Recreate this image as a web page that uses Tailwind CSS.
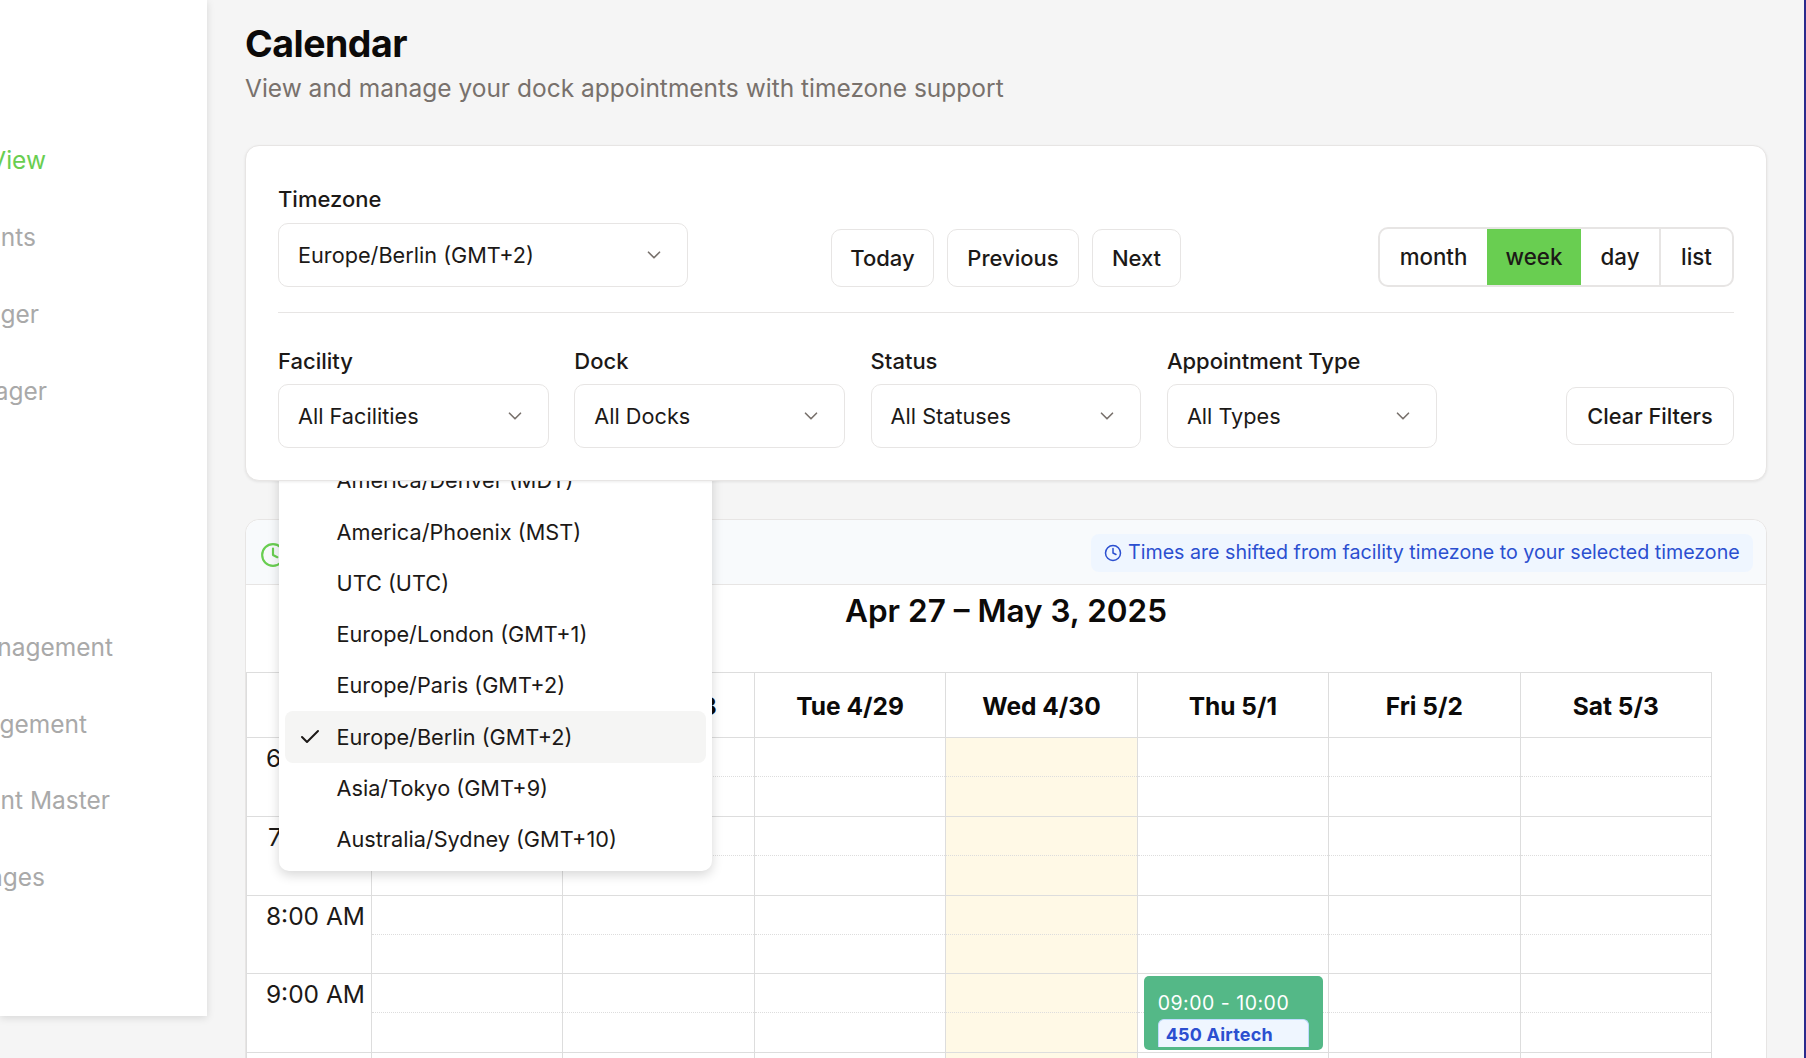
<!DOCTYPE html>
<html lang="en">
<head>
  <meta charset="UTF-8" />
  <title>Calendar</title>
  <script src="https://cdn.jsdelivr.net/npm/@tailwindcss/browser@4"></script>
</head>
<body class="bg-[#f5f5f5] font-['Inter',sans-serif] text-[#1c1917]">
<div class="relative flex h-[1058px] w-[1806px] overflow-hidden">

  <!-- sidebar, scrolled off to the left -->
  <aside class="relative h-[1016px] w-[207px] shrink-0 overflow-hidden bg-white text-[24.5px] leading-[32px] text-[#a9a9a9] shadow-[0_2px_8px_rgba(0,0,0,0.12)]">
    <div class="flex w-[46px] justify-end whitespace-nowrap pt-[144px] text-[#69ce51]">View</div>
    <div class="mt-[45px] flex w-[36px] justify-end whitespace-nowrap">nts</div>
    <div class="mt-[45px] flex w-[39px] justify-end whitespace-nowrap">ger</div>
    <div class="mt-[45px] flex w-[47px] justify-end whitespace-nowrap">ager</div>
    <div class="mt-[224px] flex w-[113px] justify-end whitespace-nowrap">nagement</div>
    <div class="mt-[45px] flex w-[87px] justify-end whitespace-nowrap">gement</div>
    <div class="mt-[44px] flex w-[110px] justify-end whitespace-nowrap">nt Master</div>
    <div class="mt-[45px] flex w-[45px] justify-end whitespace-nowrap">ages</div>
  </aside>

  <main class="relative w-[1559px] shrink-0 pl-[38px]">
    <h1 class="mt-[22px] text-[37.5px] font-bold leading-[44px] tracking-[-0.5px] text-[#0c0a09]">Calendar</h1>
    <p class="mt-[6px] text-[24.5px] leading-[32px] text-[#78716c]">View and manage your dock appointments with timezone support</p>

    <!-- controls card -->
    <section class="relative z-20 mt-[41px] h-[336px] w-[1522px] rounded-[14px] border border-[#e7e5e4] bg-white px-[32px] pt-[39px] shadow-[0_1px_3px_rgba(0,0,0,0.08)]">
      <div class="flex items-end">
        <div>
          <label class="block text-[22px] font-medium leading-[28px]">Timezone</label>
          <button class="mt-[10px] flex h-[64px] w-[410px] items-center justify-between rounded-[10px] border border-[#e7e5e4] bg-white pl-[19px] pr-[22px] text-[21.7px]">
            Europe/Berlin (GMT+2)
            <svg class="h-[22px] w-[22px] text-[#78716c]" viewBox="0 0 24 24" fill="none" stroke="currentColor" stroke-width="1.8" stroke-linecap="round" stroke-linejoin="round"><path d="m6 9 6 6 6-6"/></svg>
          </button>
        </div>
        <div class="ml-[143px] flex gap-[13px] text-[22px] font-medium">
          <button class="h-[58px] w-[103px] rounded-[10px] border border-[#e7e5e4] bg-white">Today</button>
          <button class="h-[58px] w-[132px] rounded-[10px] border border-[#e7e5e4] bg-white">Previous</button>
          <button class="h-[58px] w-[89px] rounded-[10px] border border-[#e7e5e4] bg-white">Next</button>
        </div>
        <div class="ml-auto flex h-[60px] w-[356px] overflow-hidden rounded-[10px] border-2 border-[#e7e5e4] text-[22.3px] font-medium">
          <button class="w-[107px]">month</button>
          <button class="w-[94px] bg-[#69ce51]">week</button>
          <button class="w-[80px] border-r-2 border-[#e7e5e4]">day</button>
          <button class="flex-1">list</button>
        </div>
      </div>
      <div class="mt-[25px] h-px w-full bg-[#e7e5e4]"></div>
      <div class="mt-[34px] flex items-end gap-[25.8px]">
        <div>
          <label class="block text-[22px] font-medium leading-[28px]">Facility</label>
          <button class="mt-[9px] flex h-[64px] w-[270.5px] items-center justify-between rounded-[10px] border border-[#e7e5e4] bg-white pl-[19px] pr-[22px] text-[21.7px]">
            All Facilities
            <svg class="h-[22px] w-[22px] text-[#78716c]" viewBox="0 0 24 24" fill="none" stroke="currentColor" stroke-width="1.8" stroke-linecap="round" stroke-linejoin="round"><path d="m6 9 6 6 6-6"/></svg>
          </button>
        </div>
        <div>
          <label class="block text-[22px] font-medium leading-[28px]">Dock</label>
          <button class="mt-[9px] flex h-[64px] w-[270.5px] items-center justify-between rounded-[10px] border border-[#e7e5e4] bg-white pl-[19px] pr-[22px] text-[21.7px]">
            All Docks
            <svg class="h-[22px] w-[22px] text-[#78716c]" viewBox="0 0 24 24" fill="none" stroke="currentColor" stroke-width="1.8" stroke-linecap="round" stroke-linejoin="round"><path d="m6 9 6 6 6-6"/></svg>
          </button>
        </div>
        <div>
          <label class="block text-[22px] font-medium leading-[28px]">Status</label>
          <button class="mt-[9px] flex h-[64px] w-[270.5px] items-center justify-between rounded-[10px] border border-[#e7e5e4] bg-white pl-[19px] pr-[22px] text-[21.7px]">
            All Statuses
            <svg class="h-[22px] w-[22px] text-[#78716c]" viewBox="0 0 24 24" fill="none" stroke="currentColor" stroke-width="1.8" stroke-linecap="round" stroke-linejoin="round"><path d="m6 9 6 6 6-6"/></svg>
          </button>
        </div>
        <div>
          <label class="block text-[22px] font-medium leading-[28px]">Appointment Type</label>
          <button class="mt-[9px] flex h-[64px] w-[270.5px] items-center justify-between rounded-[10px] border border-[#e7e5e4] bg-white pl-[19px] pr-[22px] text-[21.7px]">
            All Types
            <svg class="h-[22px] w-[22px] text-[#78716c]" viewBox="0 0 24 24" fill="none" stroke="currentColor" stroke-width="1.8" stroke-linecap="round" stroke-linejoin="round"><path d="m6 9 6 6 6-6"/></svg>
          </button>
        </div>
        <button class="ml-auto mb-[3px] h-[58px] w-[168px] rounded-[10px] border border-[#e7e5e4] bg-white text-[21.8px] font-medium">Clear Filters</button>
      </div>
    </section>

    <!-- timezone dropdown, slides under the controls card -->
    <div class="absolute left-[72px] top-[455px] z-10 h-[416px] w-[433px] overflow-hidden rounded-[10px] bg-white px-[6px] text-[21.7px] shadow-[0_4px_12px_rgba(0,0,0,0.16)]">
      <div class="flex h-[51.25px] items-center pl-[51.5px]">America/Denver (MDT)</div>
      <div class="flex h-[51.25px] items-center pl-[51.5px]">America/Phoenix (MST)</div>
      <div class="flex h-[51.25px] items-center pl-[51.5px]">UTC (UTC)</div>
      <div class="flex h-[51.25px] items-center pl-[51.5px]">Europe/London (GMT+1)</div>
      <div class="flex h-[51.25px] items-center pl-[51.5px]">Europe/Paris (GMT+2)</div>
      <div class="relative flex h-[51.25px] items-center rounded-[8px] bg-[#f5f5f4] pl-[51.5px]">
        <svg class="absolute left-[13px] top-[14px] h-[24px] w-[24px]" viewBox="0 0 24 24" fill="none" stroke="currentColor" stroke-width="2" stroke-linecap="round" stroke-linejoin="round"><path d="M20 6 9 17l-5-5"/></svg>
        Europe/Berlin (GMT+2)
      </div>
      <div class="flex h-[51.25px] items-center pl-[51.5px]">Asia/Tokyo (GMT+9)</div>
      <div class="flex h-[51.25px] items-center pl-[51.5px]">Australia/Sydney (GMT+10)</div>
    </div>

    <!-- calendar card -->
    <section class="mt-[38px] w-[1522px] rounded-t-[14px] border border-[#e7e5e4] bg-white">
      <div class="flex h-[65px] items-center justify-between rounded-t-[14px] border-b border-[#e7e5e4] bg-[#f8fafc] pl-[14px] pr-[13px]">
        <svg class="mt-[6px] h-[26px] w-[26px] text-[#69ce51]" viewBox="0 0 24 24" fill="none" stroke="currentColor" stroke-width="2" stroke-linecap="round" stroke-linejoin="round"><circle cx="12" cy="12" r="10"/><path d="M12 6v6l4 2"/></svg>
        <div class="mt-[2px] flex h-[38px] w-[662px] items-center gap-[6px] rounded-[8px] bg-[#eff6ff] pl-[13px] text-[19.65px] text-[#2b4fd0]">
          <svg class="h-[18px] w-[18px]" viewBox="0 0 24 24" fill="none" stroke="currentColor" stroke-width="2" stroke-linecap="round" stroke-linejoin="round"><circle cx="12" cy="12" r="10"/><path d="M12 6v6l4 2"/></svg>
          Times are shifted from facility timezone to your selected timezone
        </div>
      </div>
      <h2 class="h-[87px] pl-[599px] pt-[6px] text-[31.5px] font-semibold leading-[40px] text-[#0c0a09]">Apr 27 – May 3, 2025</h2>

      <div id="grid" class="h-[392px] w-[1466px] overflow-hidden border-l border-t border-[#dddddd]">
        <div class="grid h-[65px] grid-cols-[125px_repeat(7,191.43px)] border-b border-[#dddddd] text-center text-[24.5px] font-bold leading-[66px] text-[#0c0a09]">
          <div class="border-r border-[#dddddd]"></div>
          <div class="border-r border-[#dddddd]">Sun 4/27</div>
          <div class="border-r border-[#dddddd]">Mon 4/28</div>
          <div class="border-r border-[#dddddd]">Tue 4/29</div>
          <div class="border-r border-[#dddddd]">Wed 4/30</div>
          <div class="border-r border-[#dddddd]">Thu 5/1</div>
          <div class="border-r border-[#dddddd]">Fri 5/2</div>
          <div class="border-r border-[#dddddd]">Sat 5/3</div>
        </div>
        <div id="rows"></div>
      </div>
    </section>
  </main>

  <div class="absolute right-0 top-0 h-full w-[2px] bg-[#2a2a8c]"></div>
</div>

<script>
  // one row per hour, each cell split by a dotted half hour line
  const hours = ['6:00 AM', '7:00 AM', '8:00 AM', '9:00 AM', '10:00 AM'];
  const rows = document.getElementById('rows');

  hours.forEach((hour) => {
    const row = document.createElement('div');
    row.className = 'grid h-[78.8px] grid-cols-[125px_repeat(7,191.43px)] border-b border-[#dddddd]';
    let html = `<div class="h-full border-r border-[#dddddd] pr-[6px] pt-[2px] text-right text-[24.5px] leading-[36px]">${hour}</div>`;
    for (let d = 0; d < 7; d++) {
      const today = d === 3 ? 'bg-[#fff9e6]' : '';
      let event = '';
      if (hour === '9:00 AM' && d === 4) {
        event = `<div class="absolute left-[6px] top-[2px] z-10 h-[74px] w-[179px] overflow-hidden rounded-[5px] bg-[#54b887] pl-[14px] pt-[15px]">
          <div class="text-[19.5px] leading-[24px] tracking-[0.5px] text-white">09:00 - 10:00</div>
          <div class="mt-[4px] h-[28px] w-[151px] overflow-hidden rounded-t-[6px] border border-b-0 border-[#bfdbfe] bg-[#eff6ff] pl-[7px] text-[18px] font-bold leading-[30px] tracking-[0.2px] text-[#2b4fd0]">450 Airtech</div>
        </div>`;
      }
      html += `<div class="relative h-full border-r border-[#dddddd] ${today}"><div class="h-[39px] border-b border-dotted border-[#dddddd]"></div>${event}</div>`;
    }
    row.innerHTML = html;
    rows.appendChild(row);
  });
</script>
</body>
</html>
